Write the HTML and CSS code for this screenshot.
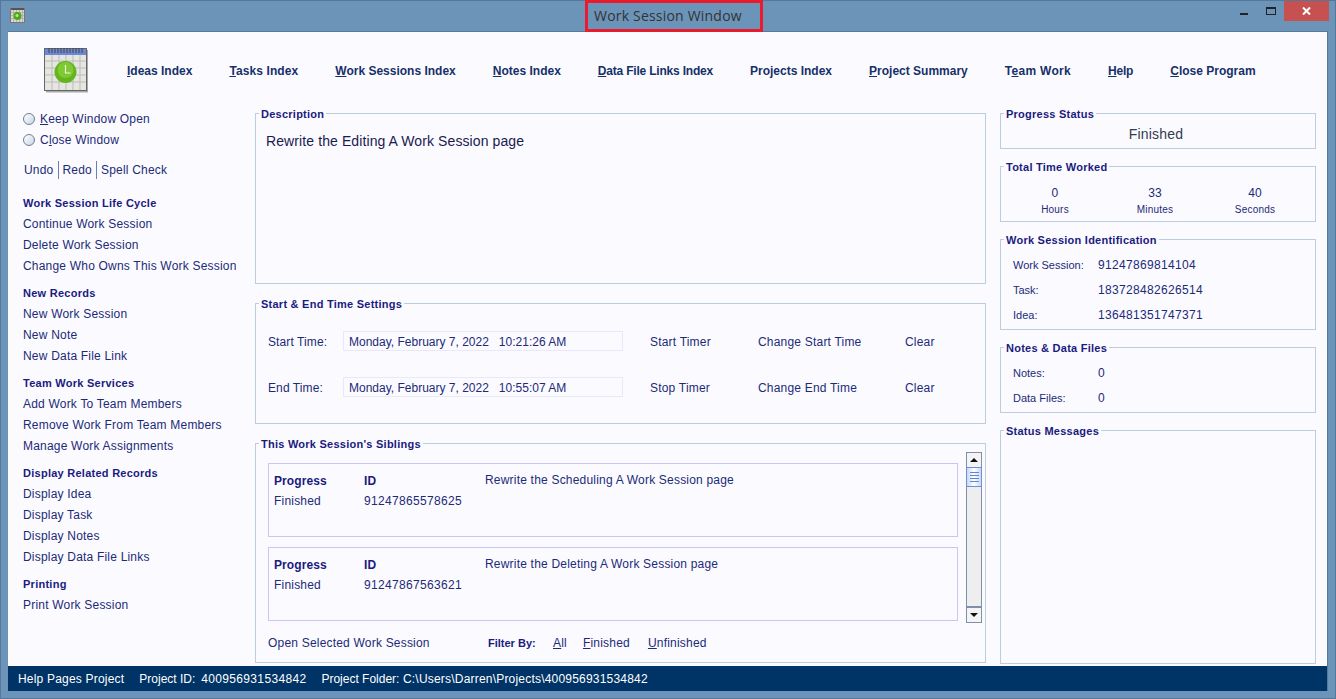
FILE: index.html
```html
<!DOCTYPE html>
<html lang="en">
<head>
  <meta charset="UTF-8" />
  <title>Work Session Window</title>
  <link rel="stylesheet" href="styles.css">
</head>
<body>

  <div class="window">
    <div class="titlebar">
      <svg class="app-icon" viewBox="0 0 16 16" width="16" height="16">
        <rect x="0.5" y="1.5" width="14" height="14" fill="#d8d8d0" stroke="#777"/>
        <path d="M1 5.5h13M1 8.5h13M1 11.5h13M3.5 3v12M6.5 3v12M9.5 3v12M12.5 3v12" stroke="#b4b4ac" stroke-width="1"/>
        <rect x="1" y="1" width="13" height="2" fill="#555"/>
        <circle cx="7.5" cy="9" r="4" fill="#4ea81e"/>
        <circle cx="7" cy="8.5" r="1.5" fill="#b8ec80"/>
      </svg>
      <div class="title-box">Work Session Window</div>
      <div class="win-controls">
        <span class="win-min"></span>
        <span class="win-max"></span>
        <span class="win-close">
          <svg viewBox="0 0 9 8" width="9" height="8"><path d="M1 0.5 L8 7.5 M8 0.5 L1 7.5" stroke="#fff" stroke-width="2" fill="none"/></svg>
        </span>
      </div>
    </div>

    <div class="client">
      <nav class="topnav">
        <svg class="logo" viewBox="0 0 44 46" width="44" height="46">
          <rect x="0.5" y="1.5" width="42" height="42" fill="#e6e6e0" stroke="#666"/>
          <rect x="1" y="2" width="41" height="6" fill="#6c86d8"/>
          <path d="M5 1v5M8 1v5M11 1v5M14 1v5M17 1v5M20 1v5M23 1v5M26 1v5M29 1v5M32 1v5M35 1v5M38 1v5" stroke="#444" stroke-width="1"/>
          <path d="M1 14h41M1 21h41M1 28h41M1 35h41M8 8v35M15 8v35M22 8v35M29 8v35M36 8v35" stroke="#bbb" stroke-width="1"/>
          <rect x="43" y="3" width="1" height="42" fill="#aaa"/>
          <rect x="2" y="44" width="42" height="1.5" fill="#aaa"/>
          <circle cx="21.5" cy="25" r="11" fill="#62b51e"/>
          <circle cx="21.5" cy="23" r="8" fill="#8bd23c" opacity="0.7"/>
          <path d="M21.5 18v8h5" stroke="#eef8dc" stroke-width="1.2" fill="none"/>
        </svg>
        <a><u>I</u>deas Index</a>
        <a class="nav-loose"><u>T</u>asks Index</a>
        <a><u>W</u>ork Sessions Index</a>
        <a><u>N</u>otes Index</a>
        <a class="nav-tight"><u>D</u>ata File Links Index</a>
        <a>Projects Index</a>
        <a><u>P</u>roject Summary</a>
        <a class="nav-wide">T<u>e</u>am Work</a>
        <a class="nav-tight"><u>H</u>elp</a>
        <a><u>C</u>lose Program</a>
      </nav>

      <div class="columns">
        <aside class="sidebar">
          <label class="radio"><span class="radio-dot"></span><span><u>K</u>eep Window Open</span></label>
          <label class="radio"><span class="radio-dot"></span><span>C<u>l</u>ose Window</span></label>
          <div class="edit-links"><span>Undo</span><span>Redo</span><span>Spell Check</span></div>

          <h3>Work Session Life Cycle</h3>
          <a>Continue Work Session</a>
          <a>Delete Work Session</a>
          <a>Change Who Owns This Work Session</a>

          <h3>New Records</h3>
          <a>New Work Session</a>
          <a>New Note</a>
          <a>New Data File Link</a>

          <h3>Team Work Services</h3>
          <a>Add Work To Team Members</a>
          <a>Remove Work From Team Members</a>
          <a>Manage Work Assignments</a>

          <h3>Display Related Records</h3>
          <a>Display Idea</a>
          <a>Display Task</a>
          <a>Display Notes</a>
          <a>Display Data File Links</a>

          <h3>Printing</h3>
          <a>Print Work Session</a>
        </aside>

        <main class="middle">
          <fieldset class="panel description">
            <legend>Description</legend>
            <p>Rewrite the Editing A Work Session page</p>
          </fieldset>

          <fieldset class="panel times">
            <legend>Start &amp; End Time Settings</legend>
            <div class="time-row">
              <span class="time-label">Start Time:</span>
              <span class="time-value">Monday, February 7, 2022&nbsp;&nbsp; 10:21:26 AM</span>
              <span class="time-timer">Start Timer</span>
              <span class="time-change">Change Start Time</span>
              <span>Clear</span>
            </div>
            <div class="time-row">
              <span class="time-label">End Time:</span>
              <span class="time-value">Monday, February 7, 2022&nbsp;&nbsp; 10:55:07 AM</span>
              <span class="time-timer">Stop Timer</span>
              <span class="time-change">Change End Time</span>
              <span>Clear</span>
            </div>
          </fieldset>

          <fieldset class="panel siblings">
            <legend>This Work Session's Siblings</legend>
            <div class="sibling-list">
              <div class="sibling-cards">
                <div class="card">
                  <div class="card-col col-progress"><b>Progress</b><span>Finished</span></div>
                  <div class="card-col col-id"><b>ID</b><span class="num">91247865578625</span></div>
                  <div class="card-desc">Rewrite the Scheduling A Work Session page</div>
                </div>
                <div class="card">
                  <div class="card-col col-progress"><b>Progress</b><span>Finished</span></div>
                  <div class="card-col col-id"><b>ID</b><span class="num">91247867563621</span></div>
                  <div class="card-desc">Rewrite the Deleting A Work Session page</div>
                </div>
              </div>
              <div class="scrollbar">
                <div class="sb-btn"><span class="arrow-up"></span></div>
                <div class="sb-thumb"><i></i><i></i><i></i><i></i></div>
                <div class="sb-track"></div>
                <div class="sb-btn sb-btn-down"><span class="arrow-down"></span></div>
              </div>
            </div>
            <div class="sibling-foot">
              <span class="open-link">Open Selected Work Session</span>
              <b class="filter-label">Filter By:</b>
              <span class="filter-all"><u>A</u>ll</span>
              <span class="filter-done"><u>F</u>inished</span>
              <span><u>U</u>nfinished</span>
            </div>
          </fieldset>
        </main>

        <section class="right">
          <fieldset class="panel progress">
            <legend>Progress Status</legend>
            <p>Finished</p>
          </fieldset>

          <fieldset class="panel total">
            <legend>Total Time Worked</legend>
            <div class="total-row">
              <div><span>0</span><small>Hours</small></div>
              <div><span>33</span><small>Minutes</small></div>
              <div><span>40</span><small>Seconds</small></div>
            </div>
          </fieldset>

          <fieldset class="panel ident">
            <legend>Work Session Identification</legend>
            <div class="kv"><small>Work Session:</small><span class="num">91247869814104</span></div>
            <div class="kv"><small>Task:</small><span class="num">183728482626514</span></div>
            <div class="kv"><small>Idea:</small><span class="num">136481351747371</span></div>
          </fieldset>

          <fieldset class="panel notes">
            <legend>Notes &amp; Data Files</legend>
            <div class="kv"><small>Notes:</small><span>0</span></div>
            <div class="kv"><small>Data Files:</small><span>0</span></div>
          </fieldset>

          <fieldset class="panel messages">
            <legend>Status Messages</legend>
          </fieldset>
        </section>
      </div>

      <footer class="statusbar">
        <span>Help Pages Project</span>
        <span class="status-id"><span class="status-key">Project ID:</span><span class="num">400956931534842</span></span>
        <span><span class="status-key">Project Folder:</span> C:\Users\Darren\Projects\400956931534842</span>
      </footer>
    </div>
  </div>

</body>
</html>
```

FILE: styles.css
```css
* {
  box-sizing: border-box;
}

html, body {
  margin: 0;
  padding: 0;
  height: 699px;
  overflow: hidden;
}

body {
  font-family: "Liberation Sans", Arial, sans-serif;
  font-size: 12px;
  letter-spacing: 0.2px;
  color: #1c2a78;
}

.num {
  letter-spacing: 0.33px;
}

.window {
  height: 699px;
  background: #6c93b8;
  border: 1px solid #54789a;
  padding: 0 7px 7px 7px;
  display: flex;
  flex-direction: column;
}

/* title bar */
.titlebar {
  height: 30px;
  display: flex;
  align-items: flex-start;
  position: relative;
}

.app-icon {
  margin: 6px 0 0 2px;
}

.title-box {
  margin-left: 559px;
  width: 178px;
  height: 32px;
  margin-top: -1px;
  border: 3px solid #e81c2c;
  padding: 3px 0 0 6px;
  font-family: "Open Sans", sans-serif;
  font-size: 14px;
  letter-spacing: 0.2px;
  color: #333;
  position: relative;
  z-index: 2;
}

.win-controls {
  margin-left: auto;
  display: flex;
  align-items: flex-start;
  margin-right: -1px;
}

.win-min {
  width: 8px;
  height: 2px;
  background: #222;
  margin: 12px 18px 0 0;
}

.win-max {
  width: 10px;
  height: 8px;
  border: 1px solid #222;
  border-top-width: 2px;
  margin: 6px 8px 0 0;
}

.win-close {
  width: 45px;
  height: 20px;
  background: #c75050;
  display: flex;
  align-items: center;
  justify-content: center;
}

/* client area */
.client {
  flex: 1;
  background: #fbfbff;
  border: 1px solid #557a9c;
  border-width: 1px 1px 0 0;
  display: flex;
  flex-direction: column;
  min-height: 0;
}

.topnav {
  height: 75px;
  display: flex;
  align-items: center;
  gap: 37px;
  padding: 2px 0 0 36px;
  font-weight: bold;
  letter-spacing: 0;
  color: #16306a;
}

.logo {
  margin-right: 2px;
  margin-top: -2px;
}

.topnav a {
  white-space: nowrap;
}

.topnav .nav-tight {
  letter-spacing: -0.2px;
}

.topnav .nav-loose {
  letter-spacing: 0.1px;
}

.topnav .nav-wide {
  letter-spacing: 0.3px;
}

.columns {
  flex: 1;
  display: grid;
  grid-template-columns: 233px 731px 316px;
  column-gap: 14px;
  min-height: 0;
}

/* left column */
.sidebar {
  padding: 1px 0 0 15px;
  display: flex;
  flex-direction: column;
}

.sidebar a {
  line-height: 21px;
}

.sidebar h3 {
  margin: 6px 0 0 0;
  font-size: 11px;
  letter-spacing: 0.26px;
  line-height: 21px;
  color: #1a1a80;
}

.radio {
  display: flex;
  align-items: center;
  gap: 5px;
  height: 21px;
}

.radio-dot {
  width: 12px;
  height: 12px;
  border-radius: 50%;
  border: 1px solid #6f7f90;
  background: linear-gradient(135deg, #fff, #c8d4e8);
}

.edit-links {
  display: flex;
  margin: 9px 0 7px 1px;
  height: 21px;
  align-items: center;
}

.edit-links span {
  padding: 2px 4px 2px 4px;
  border-left: 1px solid #6a80b0;
}

.edit-links span:first-child {
  padding-left: 0;
  border-left: 0;
}

/* group boxes */
.panel {
  margin: 0;
  padding: 0;
  border: 1px solid #bccde0;
  min-width: 0;
}

.panel legend {
  margin-left: 3px;
  padding: 0 2px;
  font-size: 11px;
  font-weight: bold;
  letter-spacing: 0.25px;
  line-height: 13px;
  color: #1a1a80;
  transform: translateY(1px);
}

.middle {
  display: flex;
  flex-direction: column;
  gap: 13px;
}

.description {
  height: 177px;
}

.description p {
  margin: 13px 0 0 10px;
  font-size: 14px;
  letter-spacing: 0.1px;
  color: #1a1a50;
}

.times {
  height: 127px;
  padding-top: 21px;
}

.time-row {
  display: flex;
  align-items: center;
  height: 20px;
  margin: 0 0 26px 12px;
}

.time-row span {
  padding-top: 2px;
}

.time-label {
  width: 75px;
  letter-spacing: 0.1px;
}

.time-row .time-value {
  width: 280px;
  height: 20px;
  border: 1px solid #e8e8fa;
  padding: 3px 0 0 5px;
  letter-spacing: 0;
}

.time-timer {
  width: 108px;
  margin-left: 27px;
}

.time-change {
  width: 147px;
}

.siblings {
  height: 226px;
  padding: 2px 3px 0 0;
}

.sibling-list {
  display: flex;
  gap: 8px;
  margin-left: 12px;
}

.sibling-cards {
  flex: 1;
  padding-top: 11px;
  display: flex;
  flex-direction: column;
  gap: 10px;
}

.card {
  height: 74px;
  border: 1px solid #c8c8f8;
  display: flex;
  padding: 10px 0 0 5px;
}

.card-col {
  display: flex;
  flex-direction: column;
  gap: 6px;
}

.card-col b {
  color: #1a1a80;
  letter-spacing: 0.1px;
}

.card-desc {
  margin-top: -1px;
}

.col-progress {
  width: 90px;
}

.col-id {
  width: 121px;
}

.scrollbar {
  width: 16px;
  height: 171px;
  display: flex;
  flex-direction: column;
  border-left: 1px solid #8090a8;
  border-right: 1px solid #8090a8;
}

.sb-btn {
  height: 15px;
  border-top: 1px solid #8090a8;
  background: #f4f4f4;
  display: flex;
  align-items: center;
  justify-content: center;
}

.sb-btn-down {
  height: 16px;
  border-bottom: 1px solid #8090a8;
}

.arrow-up {
  border: 4.5px solid transparent;
  border-top: 0;
  border-bottom: 4.5px solid #111;
}

.arrow-down {
  border: 4.5px solid transparent;
  border-bottom: 0;
  border-top: 4.5px solid #111;
}

.sb-thumb {
  height: 20px;
  margin: 0 -1px;
  border: 1px solid #6f8fd8;
  background: linear-gradient(to right, #c8d8f4, #ffffff 50%, #c8d8f4);
  display: flex;
  flex-direction: column;
  justify-content: center;
  align-items: center;
  gap: 2px;
}

.sb-thumb i {
  width: 9px;
  height: 1px;
  background: #5f85d8;
}

.sb-track {
  flex: 1;
  background: #eeeeee;
  border-bottom: 1px solid #8090a8;
}

.sibling-foot {
  display: flex;
  align-items: center;
  margin: 13px 0 0 12px;
}

.open-link {
  width: 220px;
}

.filter-label {
  font-size: 11px;
  letter-spacing: 0;
  width: 65px;
  color: #1a1a80;
}

.filter-all {
  margin-right: 16px;
}

.filter-done {
  margin-right: 18px;
}

/* right column */
.right {
  display: flex;
  flex-direction: column;
  gap: 11px;
}

.progress {
  height: 42px;
}

.progress p {
  margin: 6px 0 0 0;
  padding-right: 4px;
  font-size: 14px;
  text-align: center;
  color: #333a50;
}

.total {
  height: 62px;
}

.total-row {
  display: grid;
  grid-template-columns: repeat(3, 100px);
  text-align: center;
  padding: 13px 0 0 4px;
}

.total-row div {
  display: flex;
  flex-direction: column;
  gap: 4px;
}

.total-row small {
  font-size: 10px;
}

.ident {
  height: 97px;
  padding-top: 6px;
}

.notes {
  height: 72px;
  padding-top: 6px;
}

.kv {
  display: flex;
  align-items: center;
  height: 25px;
  margin-left: 12px;
}

.kv small {
  font-size: 11px;
  letter-spacing: 0;
  width: 85px;
}

.messages {
  flex: 1;
  margin-bottom: 2px;
}

/* status bar */
.statusbar {
  height: 25px;
  background: #003366;
  color: #fff;
  display: flex;
  align-items: center;
  gap: 15px;
  padding-left: 10px;
}

.status-key {
  letter-spacing: 0;
}

.status-id {
  display: flex;
  gap: 6px;
}
```
